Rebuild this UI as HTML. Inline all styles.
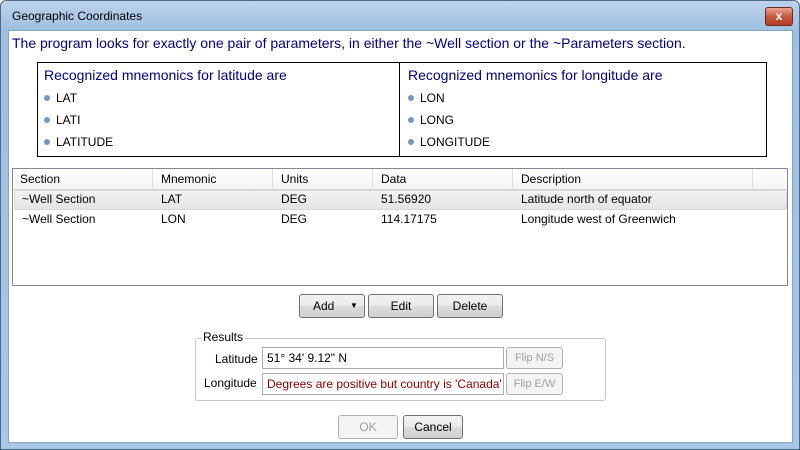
<!DOCTYPE html>
<html><head><style>
body{margin:0;width:800px;height:450px;overflow:hidden;font-family:"Segoe UI","Liberation Sans",sans-serif;font-size:12px;background:#fff;position:relative}
.a{position:absolute}
.frame{left:0;top:0;width:798px;height:448px;border:1px solid #4a6a8a;background:linear-gradient(#bcd3ea,#9fbfe0 30px,#a9c7e6);border-radius:6px 6px 0 0}
.client{left:8px;top:30px;width:783px;height:411px;background:#fff;border:1px solid #8aa4c0}
.btn{position:absolute;height:22px;border:1px solid #707070;border-radius:3px;background:linear-gradient(#f2f2f2,#ebebeb 50%,#dddddd 51%,#cfcfcf);text-align:center;line-height:22px;font-size:12px;color:#000}
.dis{border-color:#adb2b5;background:#f4f4f4;color:#a0a0a0}
.dot{display:inline-block;width:6px;height:6px;border-radius:3px;background:#7a95c4;margin-right:6px;vertical-align:1px}
.li{position:absolute;font-size:12px}
.h{color:#000080;font-size:14px}
.cell{position:absolute;font-size:12px}
.tb{position:absolute;border:1px solid #abadb3;background:#fff;height:20px;line-height:20px;padding-left:4px;font-size:12px}
</style></head><body>
<div class="a frame"></div>
<div class="a" style="left:12px;top:9px;font-size:12px;color:#000">Geographic Coordinates</div>
<div class="a" style="left:765px;top:7px;width:26px;height:17px;border:1px solid #6b2a20;border-radius:3px;background:linear-gradient(#e8a591,#c75a41 50%,#b43a20);color:#fff;text-align:center;font-weight:bold;line-height:16px;font-size:12px">x</div>
<div class="a client"></div>
<div class="a" style="left:12px;top:35px;color:#000080;font-size:14px">The program looks for exactly one pair of parameters, in either the ~Well section or the ~Parameters section.</div>
<div class="a" style="left:37px;top:62px;width:728px;height:93px;border:1px solid #000"></div>
<div class="a" style="left:399px;top:62px;width:1px;height:95px;background:#000"></div>
<div class="a h" style="left:44px;top:67px">Recognized mnemonics for latitude are</div>
<div class="li" style="left:44px;top:91px"><span class="dot"></span>LAT</div>
<div class="li" style="left:44px;top:113px"><span class="dot"></span>LATI</div>
<div class="li" style="left:44px;top:135px"><span class="dot"></span>LATITUDE</div>
<div class="a h" style="left:408px;top:67px">Recognized mnemonics for longitude are</div>
<div class="li" style="left:408px;top:91px"><span class="dot"></span>LON</div>
<div class="li" style="left:408px;top:113px"><span class="dot"></span>LONG</div>
<div class="li" style="left:408px;top:135px"><span class="dot"></span>LONGITUDE</div>
<div class="a" style="left:12px;top:168px;width:774px;height:116px;border:1px solid #828790;background:#fff"></div>
<div class="a" style="left:13px;top:169px;width:773px;height:20px;background:linear-gradient(#fff,#f3f4f6);border-bottom:1px solid #d5d5d5"></div>
<div class="a" style="left:152px;top:169px;width:1px;height:20px;background:#e0e0e0"></div>
<div class="a" style="left:272px;top:169px;width:1px;height:20px;background:#e0e0e0"></div>
<div class="a" style="left:372px;top:169px;width:1px;height:20px;background:#e0e0e0"></div>
<div class="a" style="left:512px;top:169px;width:1px;height:20px;background:#e0e0e0"></div>
<div class="a" style="left:752px;top:169px;width:1px;height:20px;background:#e0e0e0"></div>
<div class="a" style="left:14px;top:190px;width:771px;height:18px;background:linear-gradient(#f2f2f2,#e4e4e4);border:1px solid #d9d9d9;border-radius:2px"></div>
<div class="cell" style="left:20px;top:172px">Section</div><div class="cell" style="left:161px;top:172px">Mnemonic</div><div class="cell" style="left:281px;top:172px">Units</div><div class="cell" style="left:381px;top:172px">Data</div><div class="cell" style="left:521px;top:172px">Description</div>
<div class="cell" style="left:22px;top:192px">~Well Section</div><div class="cell" style="left:161px;top:192px">LAT</div><div class="cell" style="left:281px;top:192px">DEG</div><div class="cell" style="left:381px;top:192px">51.56920</div><div class="cell" style="left:521px;top:192px">Latitude north of equator</div>
<div class="cell" style="left:22px;top:212px">~Well Section</div><div class="cell" style="left:161px;top:212px">LON</div><div class="cell" style="left:281px;top:212px">DEG</div><div class="cell" style="left:381px;top:212px">114.17175</div><div class="cell" style="left:521px;top:212px">Longitude west of Greenwich</div>
<div class="btn" style="left:299px;top:294px;width:64px;text-align:left"><span style="margin-left:13px">Add</span><span style="position:absolute;left:50px;font-size:8px">▼</span></div>
<div class="btn" style="left:368px;top:294px;width:64px">Edit</div>
<div class="btn" style="left:437px;top:294px;width:64px">Delete</div>
<div class="a" style="left:195px;top:338px;width:409px;height:61px;border:1px solid #c5c5c5;border-radius:3px"></div>
<div class="a" style="left:201px;top:330px;background:#fff;padding:0 2px">Results</div>
<div class="a" style="left:215px;top:352px">Latitude</div>
<div class="a" style="left:204px;top:376px">Longitude</div>
<div class="tb" style="left:262px;top:347px;width:236px">51° 34' 9.12" N</div>
<div class="tb" style="left:262px;top:373px;width:236px;color:#8b0000">Degrees are positive but country is 'Canada'</div>
<div class="btn dis" style="left:506px;top:347px;width:55px;height:20px;line-height:20px;font-size:11px">Flip N/S</div>
<div class="btn dis" style="left:506px;top:373px;width:55px;height:20px;line-height:20px;font-size:11px">Flip E/W</div>
<div class="btn dis" style="left:338px;top:415px;width:58px">OK</div>
<div class="btn" style="left:403px;top:415px;width:58px">Cancel</div>
</body></html>
